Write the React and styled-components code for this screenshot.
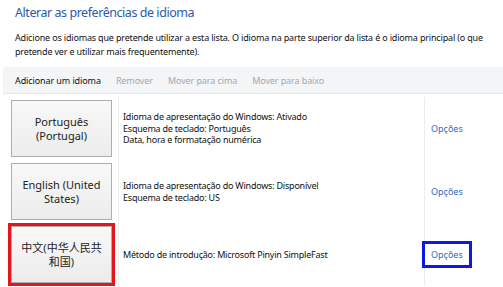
import React from "react";
import styled, { createGlobalStyle } from "styled-components";

const GlobalStyle = createGlobalStyle`
  html, body {
    margin: 0;
    padding: 0;
    background: #ffffff;
  }
  body {
    font-family: "Noto Sans", "Noto Sans CJK SC", sans-serif;
    color: #111;
  }
`;

const Page = styled.div`
  width: 503px;
  height: 287px;
  overflow: hidden;
  background: #fff;
`;

const Header = styled.div`
  padding: 4px 0 0 15px;
`;

const Title = styled.h1`
  margin: 0;
  font-size: 12.5px;
  line-height: 18px;
  font-weight: 400;
  letter-spacing: -0.45px;
  color: #2c5aa8;
  white-space: nowrap;
`;

const Intro = styled.p`
  margin: 9px 0 0;
  font-size: 9px;
  line-height: 14px;
  letter-spacing: -0.17px;
  white-space: nowrap;
`;

const Toolbar = styled.div`
  margin: 8px 0 0 3px;
  height: 26px;
  display: flex;
  align-items: center;
  gap: 15px;
  padding-left: 12px;
  background: #f3f5f7;
  border-bottom: 1px solid #e6e8eb;
  font-size: 9px;
  letter-spacing: -0.1px;
`;

const ToolItem = styled.span`
  color: ${(p) => (p.disabled ? "#a4a8ad" : "#111")};
  white-space: nowrap;
`;

const List = styled.div`
  display: grid;
  grid-template-columns: 118px 306px 1fr;
  padding-top: 3px;
`;

const Cell = styled.div`
  height: 63px;
  display: flex;
  align-items: center;
  border-left: ${(p) => (p.divider ? "1px solid #ececec" : "none")};
  padding-left: ${(p) => p.pad || 0}px;
`;

const LangButton = styled.div`
  margin-left: 11px;
  width: 101px;
  height: 57px;
  box-sizing: border-box;
  display: flex;
  align-items: center;
  justify-content: center;
  text-align: center;
  font-size: 11px;
  line-height: 13.5px;
  color: #222;
  border: 1px solid #adadad;
  background: linear-gradient(#f8f8f8, #ececec);
  outline: ${(p) => (p.marked ? "3px solid #e3161c" : "none")};
`;

const Details = styled.div`
  font-size: 9px;
  line-height: 11.7px;
  letter-spacing: -0.22px;
  white-space: nowrap;
`;

const OptionsLink = styled.span`
  padding: 4px 6px;
  font-size: 9px;
  line-height: 13px;
  color: #2f6bc4;
  outline: ${(p) => (p.marked ? "3px solid #0a1ae6" : "none")};
`;

const languages = [
  {
    name: ["Português", "(Portugal)"],
    details: [
      "Idioma de apresentação do Windows: Ativado",
      "Esquema de teclado: Português",
      "Data, hora e formatação numérica",
    ],
  },
  {
    name: ["English (United", "States)"],
    details: [
      "Idioma de apresentação do Windows: Disponível",
      "Esquema de teclado: US",
    ],
  },
  {
    name: ["中文(中华人民共", "和国)"],
    details: ["Método de introdução: Microsoft Pinyin SimpleFast"],
    marked: true,
  },
];

const App = () => {
  return (
    <Page>
      <GlobalStyle />
      <Header>
        <Title>Alterar as preferências de idioma</Title>
        <Intro>
          Adicione os idiomas que pretende utilizar a esta lista. O idioma na parte superior da lista é o idioma principal (o que
          <br />
          pretende ver e utilizar mais frequentemente).
        </Intro>
      </Header>

      <Toolbar>
        <ToolItem>Adicionar um idioma</ToolItem>
        <ToolItem disabled>Remover</ToolItem>
        <ToolItem disabled>Mover para cima</ToolItem>
        <ToolItem disabled>Mover para baixo</ToolItem>
      </Toolbar>

      <List>
        {languages.map((lang) => (
          <React.Fragment key={lang.name[0]}>
            <Cell>
              <LangButton marked={lang.marked}>
                {lang.name[0]}
                <br />
                {lang.name[1]}
              </LangButton>
            </Cell>
            <Cell divider pad={4}>
              <Details>
                {lang.details.map((line) => (
                  <div key={line}>{line}</div>
                ))}
              </Details>
            </Cell>
            <Cell divider>
              <OptionsLink marked={lang.marked}>Opções</OptionsLink>
            </Cell>
          </React.Fragment>
        ))}
      </List>
    </Page>
  );
};

export default App;
